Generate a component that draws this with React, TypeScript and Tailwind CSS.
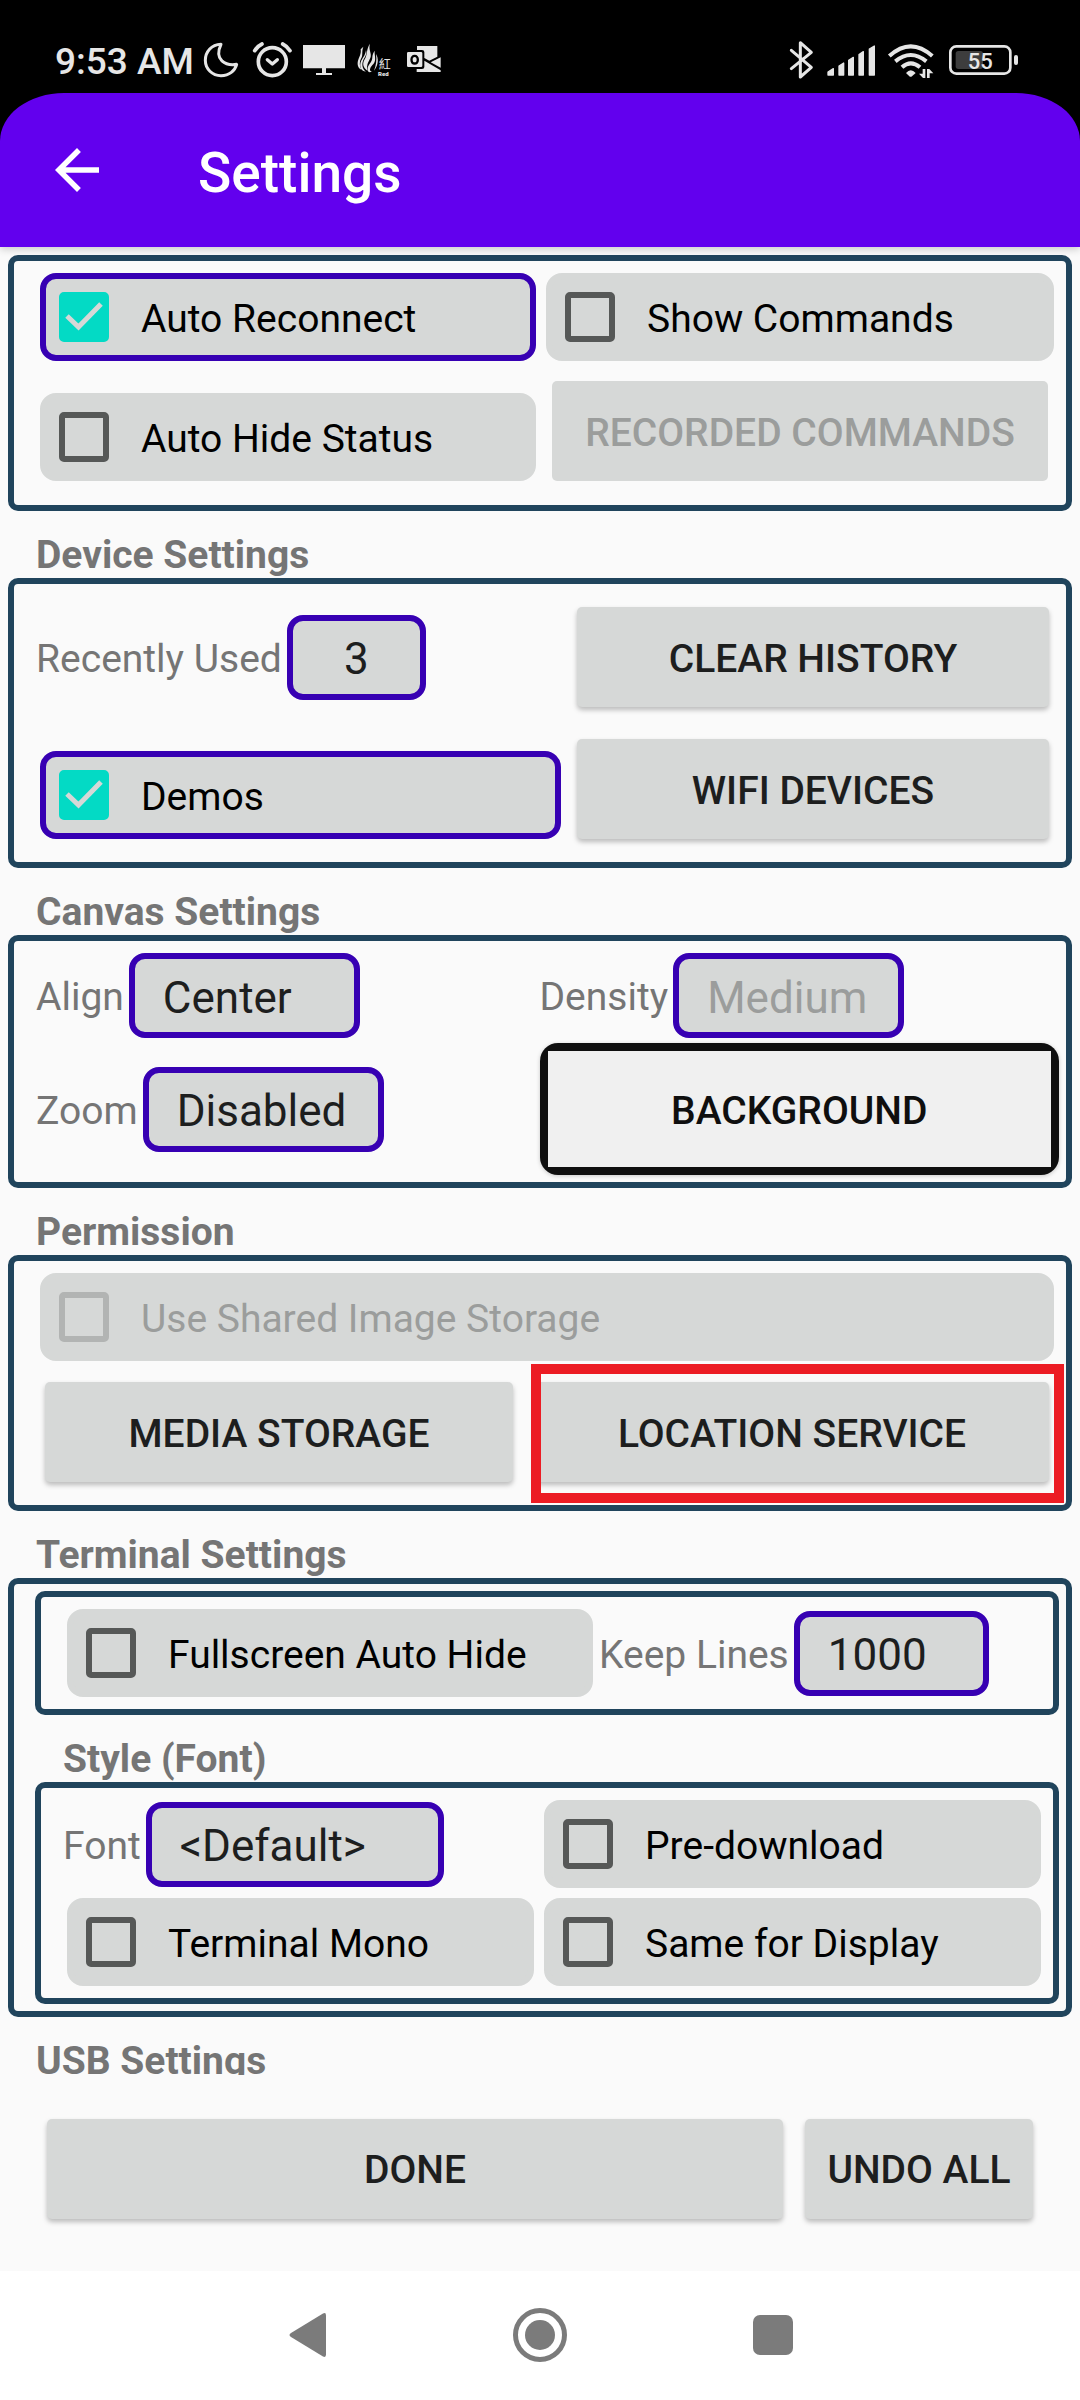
import { useId, type ReactNode } from "react";

function MoonIcon() {
  return (
    <svg className="h-[60px] w-10" viewBox="30 0 120 180" fill="none" stroke="#e6e6e6" strokeWidth="9" strokeLinejoin="round" aria-hidden="true">
      <path d="M87 43 C58 44 40 66 40 91 C40 117 61 137 87 137 C112 137 129 122 134 103 C101 108 65 90 87 43 Z" />
    </svg>
  );
}

function AlarmIcon() {
  return (
    <svg className="h-[60px] w-11" viewBox="174 0 132 180" fill="none" stroke="#e6e6e6" strokeLinecap="round" strokeLinejoin="round" aria-hidden="true">
      <circle cx="241" cy="95" r="42" strokeWidth="11" />
      <path d="M226 89 L241 102 L256 89" strokeWidth="10" />
      <path d="M188 62 Q196 49 210 42 M294 62 Q286 49 272 42" strokeWidth="11" />
    </svg>
  );
}

function MonitorIcon() {
  return (
    <svg className="h-[60px] w-11" viewBox="330 0 132 180" fill="#e6e6e6" aria-hidden="true">
      <path d="M333 45 H459 V115 H402 V129 H420 V135 H372 V129 H390 V115 H333 Z" />
    </svg>
  );
}

function FlameIcon() {
  return (
    <svg className="h-[60px] w-10" viewBox="486 0 120 180" fill="#e6e6e6" aria-hidden="true">
      <path d="M514 50 C508 66 514 76 507 86 C502 94 502 108 508 119 C498 114 495 103 498 92 C502 80 508 72 506 58 Z" />
      <path d="M534 41 C528 60 541 70 535 84 C530 95 523 103 526 122 C512 112 511 100 518 88 C527 74 522 58 534 41 Z" />
      <path d="M522 60 C527 74 516 82 512 96 C509 108 514 120 522 125 C508 124 502 112 506 97 C510 84 520 78 522 60 Z" />
      <path d="M548 62 C547 76 552 84 548 95 C545 104 536 107 534 118 C533 123 537 125 541 123 C533 131 524 124 527 113 C531 101 541 96 541 82 C541 75 544 68 548 62 Z" />
      <path d="M552 72 C560 84 560 106 546 122 C552 106 555 90 552 72 Z" />
      <text x="560" y="117" fontSize="36" fontFamily="'Noto Sans CJK TC', sans-serif">紅</text>
      <text x="558" y="139" fontSize="18" fontWeight="900" fontFamily="Roboto, sans-serif">Red</text>
    </svg>
  );
}

function OutlookIcon() {
  return (
    <svg className="h-[60px] w-10" viewBox="630 0 120 180" aria-hidden="true">
      <path fill="#e6e6e6" d="M675 48 H736 V80 L712 92 L697 84 V66 Q697 60 690 60 H675 Z" />
      <path fill="#e6e6e6" fillRule="evenodd" d="M649 66 H687 Q691 66 691 70 V107 Q691 111 687 111 H649 Q645 111 645 107 V70 Q645 66 649 66 Z M668 74 C660 74 655 80 655 89 C655 98 660 104 668 104 C676 104 681 98 681 89 C681 80 676 74 668 74 Z M668 81 C672 81 674 84 674 89 C674 94 672 97 668 97 C664 97 662 94 662 89 C662 84 664 81 668 81 Z" />
      <path fill="#e6e6e6" d="M746 82 V113 L716 97 Z M697 92 L746 121 V126 H674 V117 H690 Q697 117 697 111 Z" />
    </svg>
  );
}

function BluetoothIcon() {
  return (
    <svg className="h-[60px] w-8" viewBox="15 0 96 180" fill="none" stroke="#e6e6e6" strokeWidth="9" strokeLinecap="round" strokeLinejoin="round" aria-hidden="true">
      <path d="M34 61 L94 112 L61 141 V38 L94 67 L34 116" />
    </svg>
  );
}

function SignalIcon() {
  return (
    <svg className="h-[60px] w-[52px]" viewBox="135 0 156 180" fill="#e6e6e6" stroke="#e6e6e6" strokeWidth="4" strokeLinejoin="round" aria-hidden="true">
      <path d="M144 126 L160 116 V135 H144 Z M177 108 L191 99 V135 H177 Z M206 91 L220 82 V135 H206 Z M237 74 L250 65 V135 H237 Z M268 57 L283 48 V135 H268 Z" />
    </svg>
  );
}

function WifiIcon() {
  return (
    <svg className="h-[60px] w-[52px]" viewBox="315 0 156 180" fill="none" stroke="#e6e6e6" strokeWidth="12" aria-hidden="true">
      <path d="M328 78 Q392 20 457 78" />
      <path d="M346 94 Q392 56 439 94" />
      <path d="M366 112 Q392 88 420 112" />
      <path fill="#e6e6e6" stroke="none" d="M378 129 Q392 113 407 129 L396 139 Q392 142 388 139 Z" />
      <path fill="#e6e6e6" stroke="none" d="M428 117 H436 V144 H429 L417 131 H428 Z M441 117 H448 L460 130 H449 V144 H441 Z" />
    </svg>
  );
}

function BatteryIcon() {
  return (
    <svg className="h-[60px] w-[76px]" viewBox="495 0 228 180" aria-label="Battery 55 percent">
      <rect x="511" y="49" width="180" height="82" rx="18" fill="none" stroke="#e6e6e6" strokeWidth="8" />
      <rect x="527" y="63" width="82" height="54" rx="8" fill="#3d3d3d" />
      <rect x="702" y="75" width="12" height="30" rx="6" fill="#e6e6e6" />
      <text x="601" y="117" textAnchor="middle" fontSize="66" fontWeight="500" fontFamily="Roboto, sans-serif" fill="#e6e6e6">55</text>
    </svg>
  );
}

function Panel({ className, children }: { className: string; children: ReactNode }) {
  return <div className={`rounded-[10px] border-[6px] border-[#20445c] ${className}`}>{children}</div>;
}

function SectionTitle({ children }: { children: ReactNode }) {
  return <h2 className="mt-[21px] pl-7 text-[39px] leading-[46px] font-bold text-[#757575]">{children}</h2>;
}

function CheckOption({ label, checked, disabled }: { label: string; checked?: boolean; disabled?: boolean }) {
  const id = useId();
  return (
    <div className="flex h-[88px] items-center gap-8 rounded-2xl border-[6px] border-[#d6d8d7] bg-[#d6d8d7] pl-[13px] has-checked:border-[#3700b3]">
      <span className="grid shrink-0">
        <input
          id={id}
          type="checkbox"
          defaultChecked={checked}
          disabled={disabled}
          className="peer col-start-1 row-start-1 size-[50px] appearance-none rounded-[5px] border-[6px] border-[#565857] checked:border-[#03dac5] checked:bg-[#03dac5] disabled:border-[#b2b4b3]"
        />
        <svg className="pointer-events-none invisible col-start-1 row-start-1 size-[50px] peer-checked:visible" viewBox="0 0 50 50" fill="none" stroke="#d6d8d7" strokeWidth="5" aria-hidden="true">
          <path d="M8 24 L19.5 35 L42 12" />
        </svg>
      </span>
      <label htmlFor={id} className={`grow pt-[3px] text-[39px] leading-[46px] whitespace-nowrap ${disabled ? "text-[#9b9d9c]" : "text-black"}`}>
        {label}
      </label>
    </div>
  );
}

function SpinnerOption({ label, options, width, centered, disabled }: { label: string; options: string[]; width: string; centered?: boolean; disabled?: boolean }) {
  const id = useId();
  return (
    <div className="flex items-center gap-[5px]">
      <label htmlFor={id} className="pt-[3px] text-[39px] leading-[46px] whitespace-nowrap text-[#757575]">
        {label}
      </label>
      <select
        id={id}
        disabled={disabled}
        className={`h-[85px] appearance-none rounded-2xl border-[6px] border-[#3700b3] bg-[#d6d8d7] pt-1 text-[44px] leading-[52px] text-[#1d1e1e] opacity-100 disabled:text-[#9b9d9c] ${centered ? "text-center" : "pl-7"} ${width}`}
      >
        {options.map((option) => (
          <option key={option}>{option}</option>
        ))}
      </select>
    </div>
  );
}

function ActionButton({ children, className = "", disabled }: { children: ReactNode; className?: string; disabled?: boolean }) {
  return (
    <button
      type="button"
      disabled={disabled}
      className={`h-[100px] rounded-[5px] bg-[#d6d8d7] pt-[3px] text-[39px] leading-[46px] font-medium whitespace-nowrap text-[#1d1e1e] shadow-[0_3px_5px_rgba(0,0,0,0.25)] disabled:text-[#9b9d9c] disabled:shadow-none ${className}`}
    >
      {children}
    </button>
  );
}

export default function App() {
  return (
    <div className="flex h-screen flex-col bg-[#fafafa] font-[Roboto,sans-serif]">
      <div className="bg-black">
        <div className="flex items-center justify-between pt-[30px] pr-[59px] pb-[3px] pl-[55px] text-[#e6e6e6]">
          <div className="flex items-center gap-2">
            <span className="pt-[3px] text-[37px] leading-[45px] font-medium">9:53 AM</span>
            <MoonIcon />
            <AlarmIcon />
            <MonitorIcon />
            <FlameIcon />
            <OutlookIcon />
          </div>
          <div className="flex items-center gap-2">
            <BluetoothIcon />
            <SignalIcon />
            <WifiIcon />
            <BatteryIcon />
          </div>
        </div>
      </div>

      <div className="z-10 bg-black shadow-[0_2px_8px_rgba(0,0,0,0.2)]">
        <header className="flex h-[154px] items-center gap-[88px] bg-[#6200ee] pl-11 text-white [border-radius:64px_64px_0_0/48px_48px_0_0]">
          <button type="button" aria-label="Back">
            <svg className="size-[66px]" viewBox="0 0 24 24" fill="currentColor" aria-hidden="true">
              <path d="M20 11H7.83l5.59-5.59L12 4l-8 8 8 8 1.41-1.41L7.83 13H20v-2z" />
            </svg>
          </button>
          <h1 className="pt-[6px] text-[55px] leading-[64px] font-medium">Settings</h1>
        </header>
      </div>

      <main className="min-h-0 grow overflow-y-auto px-2 pt-2 [scrollbar-width:none]">
        <Panel className="grid grid-cols-[496fr_508fr] items-end gap-x-[10px] gap-y-5 pt-3 pr-3 pb-6 pl-[26px]">
          <CheckOption label="Auto Reconnect" checked />
          <CheckOption label="Show Commands" />
          <CheckOption label="Auto Hide Status" />
          <ActionButton className="mx-[6px]" disabled>RECORDED COMMANDS</ActionButton>
        </Panel>

        <SectionTitle>Device Settings</SectionTitle>
        <Panel className="grid grid-cols-[525fr_472fr] items-end gap-x-4 gap-y-8 pt-[23px] pr-[17px] pb-[23px] pl-[22px]">
          <div className="flex flex-col justify-center self-center">
            <SpinnerOption label="Recently Used" options={["3", "5", "10"]} width="w-[139px]" centered />
          </div>
          <ActionButton>CLEAR HISTORY</ActionButton>
          <div className="pl-1">
            <CheckOption label="Demos" checked />
          </div>
          <ActionButton>WIFI DEVICES</ActionButton>
        </Panel>

        <SectionTitle>Canvas Settings</SectionTitle>
        <Panel className="grid grid-cols-[504fr_520fr] items-center gap-y-[5px] pt-3 pr-[7px] pb-[7px] pl-[22px]">
          <SpinnerOption label="Align" options={["Center", "Left", "Right"]} width="w-[231px]" />
          <SpinnerOption label="Density" options={["Medium", "Low", "High"]} width="w-[231px]" disabled />
          <SpinnerOption label="Zoom" options={["Disabled", "Enabled"]} width="w-[241px]" />
          <button type="button" className="flex h-[132px] rounded-[18px] bg-[#0f0f0f] p-2 shadow-[0_1px_4px_rgba(0,0,0,0.2)]">
            <span className="flex grow items-center justify-center self-stretch bg-[#f0f0f0] pt-[3px] text-[39px] leading-[46px] font-medium text-[#0f0f0f]">BACKGROUND</span>
          </button>
        </Panel>

        <SectionTitle>Permission</SectionTitle>
        <Panel className="flex flex-col gap-[21px] pt-3 pr-3 pb-[23px] pl-[26px]">
          <CheckOption label="Use Shared Image Storage" disabled />
          <div className="grid grid-cols-[468fr_514fr] gap-x-[22px] px-[5px]">
            <ActionButton>MEDIA STORAGE</ActionButton>
            <div className="relative flex">
              <ActionButton className="grow">LOCATION SERVICE</ActionButton>
              <div className="pointer-events-none absolute -top-[18px] -right-[15px] -bottom-[21px] -left-1 border-[10px] border-[#ec1c24]" />
            </div>
          </div>
        </Panel>

        <SectionTitle>Terminal Settings</SectionTitle>
        <Panel className="pt-[7px] pr-[7px] pb-[7px] pl-[21px]">
          <Panel className="flex items-center gap-[6px] pt-3 pb-3 pl-[26px]">
            <div className="w-[526px]">
              <CheckOption label="Fullscreen Auto Hide" />
            </div>
            <SpinnerOption label="Keep Lines" options={["1000", "100", "500"]} width="w-[195px]" />
          </Panel>

          <SectionTitle>Style (Font)</SectionTitle>
          <Panel className="grid grid-cols-[471fr_497fr] items-center gap-x-[10px] gap-y-[10px] pt-3 pr-3 pb-3 pl-[22px]">
            <SpinnerOption label="Font" options={["<Default>", "Monospace"]} width="w-[298px]" />
            <CheckOption label="Pre-download" />
            <div className="pl-1">
              <CheckOption label="Terminal Mono" />
            </div>
            <CheckOption label="Same for Display" />
          </Panel>
        </Panel>

        <SectionTitle>USB Settings</SectionTitle>
      </main>

      <div className="flex gap-[22px] pt-11 pr-[47px] pb-[52px] pl-[47px]">
        <ActionButton className="grow">DONE</ActionButton>
        <ActionButton className="w-[228px]">UNDO ALL</ActionButton>
      </div>

      <nav className="flex h-[130px] items-center justify-center gap-[184px] bg-white text-[#7b7b7b]">
        <button type="button" aria-label="Back">
          <svg className="h-[54px] w-[44px]" viewBox="0 0 44 54" fill="currentColor" aria-hidden="true">
            <path d="M38 5.500 Q41 4 41 7.500 V46.500 Q41 50 38 48.500 L6 29 Q3 27 6 25 Z" />
          </svg>
        </button>
        <button type="button" aria-label="Home">
          <svg className="size-[54px]" viewBox="0 0 54 54" fill="none" aria-hidden="true">
            <circle cx="27" cy="27" r="24.500" stroke="currentColor" strokeWidth="5" />
            <circle cx="27" cy="27" r="15" fill="currentColor" />
          </svg>
        </button>
        <button type="button" aria-label="Recent apps">
          <svg className="h-[54px] w-[44px]" viewBox="0 0 44 54" fill="currentColor" aria-hidden="true">
            <rect x="2" y="7" width="40" height="40" rx="7" />
          </svg>
        </button>
      </nav>
    </div>
  );
}
